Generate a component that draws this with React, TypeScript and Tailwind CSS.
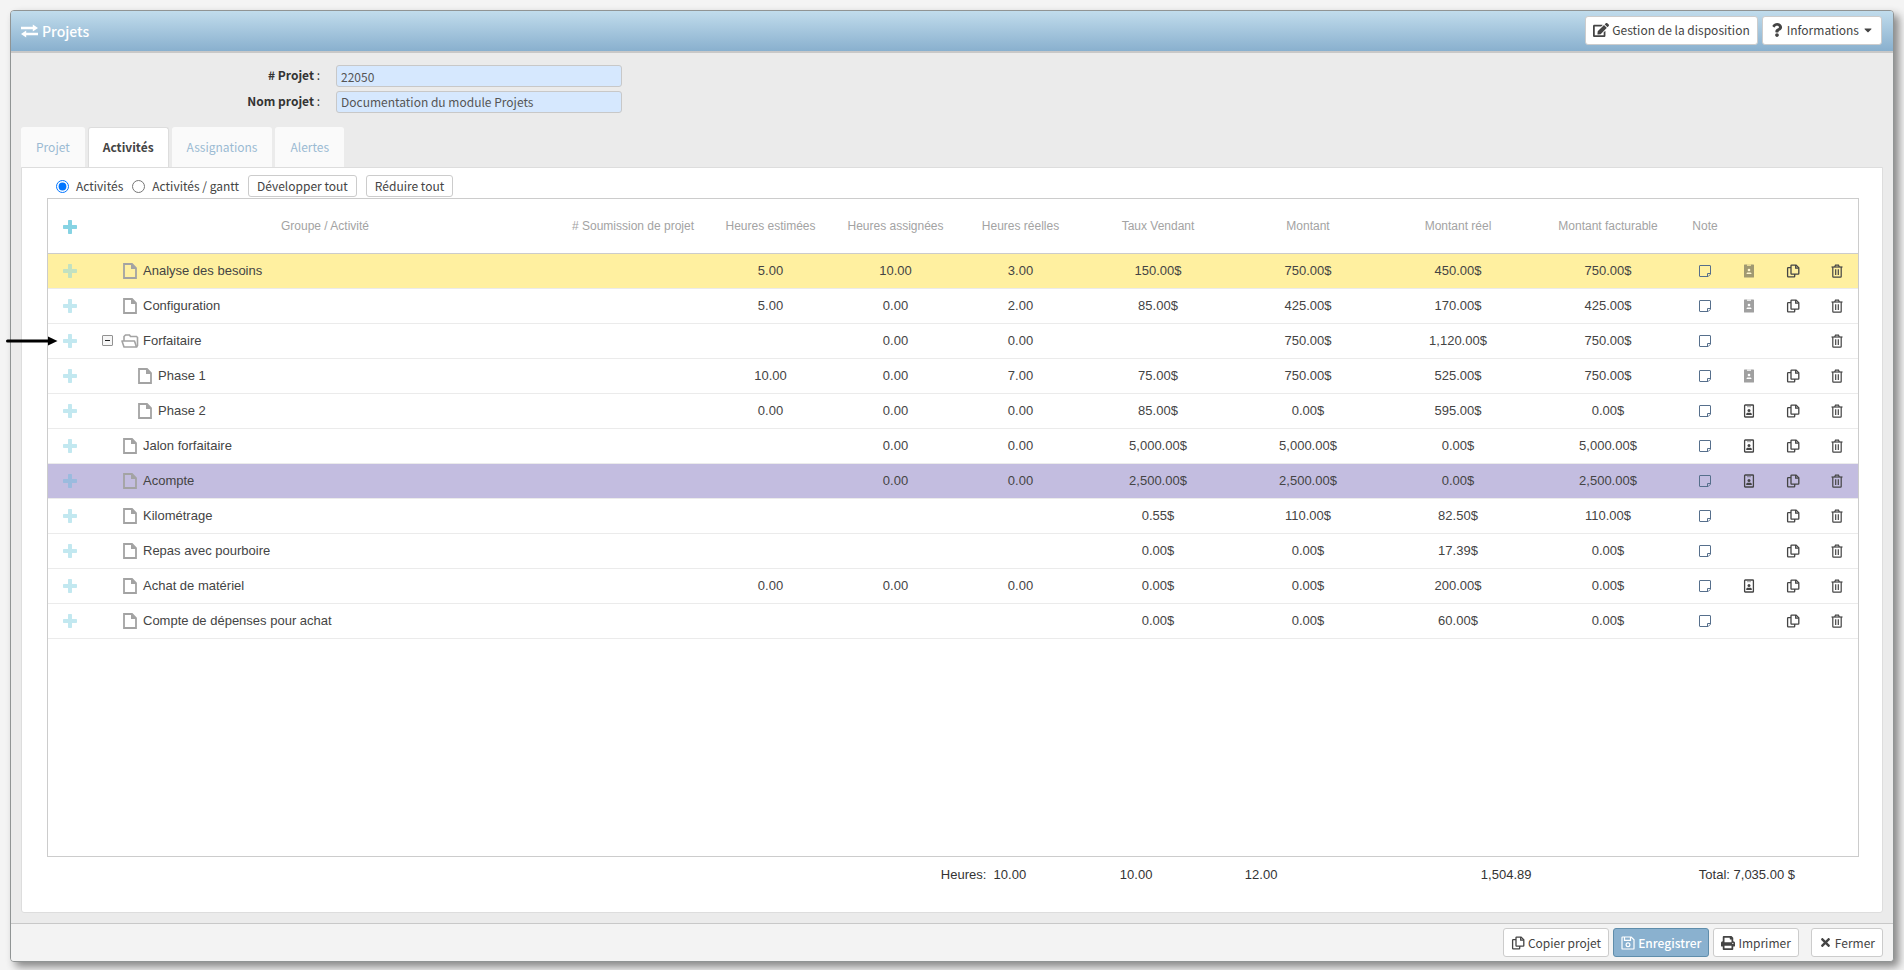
import React from 'react';
import { FaEdit, FaQuestion, FaPrint, FaTimes, FaCaretDown } from 'react-icons/fa';

type IconProps = { className?: string };

const ExchangeIcon: React.FC<IconProps> = ({ className }) => (
  <svg viewBox="0 0 17 14" className={className} fill="currentColor">
    <path d="M0 2.800h11.800V.4L17 4l-5.200 3.600V5.200H0z" />
    <path d="M17 8.800H5.200V6.400L0 10l5.200 3.600v-2.400H17z" />
  </svg>
);

const PlusIcon: React.FC<IconProps> = ({ className }) => (
  <svg viewBox="0 0 14 14" className={className} fill="currentColor">
    <path d="M5.700 0h2.600a.7.7 0 0 1 .7.7V5h4.300a.7.7 0 0 1 .7.7v2.600a.7.7 0 0 1-.7.7H9v4.300a.7.7 0 0 1-.7.7H5.700a.7.7 0 0 1-.7-.7V9H.7a.7.7 0 0 1-.7-.7V5.700A.7.7 0 0 1 .7 5H5V.7a.7.7 0 0 1 .7-.7z" />
  </svg>
);

const NoteIcon: React.FC<IconProps> = ({ className }) => (
  <svg viewBox="0 0 14 14" className={className} fill="none" stroke="currentColor" strokeWidth="1">
    <path d="M2 1.500h10a.5.5 0 0 1 .5.5v8.200l-2.300 2.300H2a.5.5 0 0 1-.5-.5V2a.5.5 0 0 1 .5-.5z" />
    <path d="M12.500 9.500H9.500v3" />
  </svg>
);

const BadgeIcon: React.FC<IconProps> = ({ className }) => (
  <svg viewBox="0 0 12 14" className={className}>
    <rect x="1.600" y="1" width="8.800" height="12" rx="0.600" fill="none" stroke="currentColor" strokeWidth="1.300" />
    <rect x="4" y="2.200" width="4" height="1" fill="currentColor" opacity="0.500" />
    <circle cx="6" cy="6.500" r="1.500" fill="currentColor" />
    <path d="M3.200 11V10.300c0-1 .8-1.500 1.600-1.500h2.400c.8 0 1.600.5 1.600 1.500V11z" fill="currentColor" />
  </svg>
);

const BadgeSolidIcon: React.FC<IconProps> = ({ className }) => (
  <svg viewBox="0 0 12 14" className={className}>
    <path d="M1.600.5H4V2H8V.5h2.400a.6.6 0 0 1 .6.6v11.800a.6.6 0 0 1-.6.6H1.600a.6.6 0 0 1-.6-.6V1.100a.6.6 0 0 1 .6-.6z" fill="currentColor" />
    <rect x="4" y="0.500" width="4" height="1" fill="currentColor" opacity="0.500" />
    <circle cx="6" cy="6" r="1.300" fill="#fff" />
    <path d="M3.500 10c0-1.200.7-1.600 1.500-1.600h2c.8 0 1.500.4 1.500 1.600z" fill="#fff" />
  </svg>
);

const CopyIcon: React.FC<IconProps> = ({ className }) => (
  <svg viewBox="0 0 14 14" className={className} fill="none" stroke="currentColor" strokeWidth="1.300">
    <path d="M5.600 1.100h4.500l2.700 2.700v5.700a.6.6 0 0 1-.6.6H5.600a.6.6 0 0 1-.6-.6V1.700a.6.6 0 0 1 .6-.6z" />
    <path d="M9.700 1.100V4.200h3" />
    <path d="M5 3.600H2.200a.6.6 0 0 0-.6.6v8.100a.6.6 0 0 0 .6.6h5.900a.6.6 0 0 0 .6-.6V10.100" />
  </svg>
);

const TrashIcon: React.FC<IconProps> = ({ className }) => (
  <svg viewBox="0 0 12 14" className={className} fill="none" stroke="currentColor" strokeWidth="1.200">
    <path d="M.5 3h11" />
    <path d="M3.700 3l.8-1.900h3l.8 1.900" />
    <path d="M1.800 3v9.400a.7.7 0 0 0 .7.700h7a.7.7 0 0 0 .7-.7V3" />
    <path d="M4.700 5.300v5.700M7.300 5.300v5.700" />
  </svg>
);

const SaveIcon: React.FC<IconProps> = ({ className }) => (
  <svg viewBox="0 0 14 14" className={className} fill="none" stroke="currentColor" strokeWidth="1.200">
    <path d="M1.600 1h8.600L13 3.800v8.600a.6.6 0 0 1-.6.6H1.600a.6.6 0 0 1-.6-.6V1.600A.6.6 0 0 1 1.600 1z" />
    <path d="M3.500 1v3.300h6V1" />
    <circle cx="7" cy="8.700" r="1.900" />
  </svg>
);

const FileIcon: React.FC<IconProps> = ({ className }) => (
  <svg viewBox="0 0 14 16" className={className}>
    <path d="M1 1H9L13 5V15H1z" fill="none" stroke="#a3a3a3" strokeWidth="1.800" />
    <path d="M8 1V6H13V5L9 1z" fill="#a3a3a3" />
  </svg>
);

const FolderIcon: React.FC<IconProps> = ({ className }) => (
  <svg viewBox="0 0 18 14" className={className} fill="none" stroke="#a3a3a3" strokeWidth="1.600">
    <path d="M3 7V2.500L4.500 1H8.500L9.500 2.500H15.500L16.500 3.500V12" />
    <path d="M1 7H13.500L15.500 13H3z" strokeLinejoin="round" />
    <path d="M15.500 13L16.500 12" />
  </svg>
);

const ToggleIcon: React.FC<IconProps> = ({ className }) => (
  <svg viewBox="0 0 11 11" className={className}>
    <rect x="0.500" y="0.500" width="10" height="10" rx="0.500" fill="#f6f6f6" stroke="#919191" />
    <path d="M3 5.500h5" stroke="#222" />
  </svg>
);

interface Row {
  name: string;
  kind?: 'file' | 'folder';
  level?: number;
  // estimées, assignées, réelles, taux, montant, montant réel, facturable
  values: string[];
  badge?: 'on' | 'off';
  copy?: boolean;
  tone?: 'yellow' | 'purple';
}

const rows: Row[] = [
  { name: 'Analyse des besoins', values: ['5.00', '10.00', '3.00', '150.00$', '750.00$', '450.00$', '750.00$'], badge: 'off', copy: true, tone: 'yellow' },
  { name: 'Configuration', values: ['5.00', '0.00', '2.00', '85.00$', '425.00$', '170.00$', '425.00$'], badge: 'off', copy: true },
  { name: 'Forfaitaire', kind: 'folder', values: ['', '0.00', '0.00', '', '750.00$', '1,120.00$', '750.00$'] },
  { name: 'Phase 1', level: 1, values: ['10.00', '0.00', '7.00', '75.00$', '750.00$', '525.00$', '750.00$'], badge: 'off', copy: true },
  { name: 'Phase 2', level: 1, values: ['0.00', '0.00', '0.00', '85.00$', '0.00$', '595.00$', '0.00$'], badge: 'on', copy: true },
  { name: 'Jalon forfaitaire', values: ['', '0.00', '0.00', '5,000.00$', '5,000.00$', '0.00$', '5,000.00$'], badge: 'on', copy: true },
  { name: 'Acompte', values: ['', '0.00', '0.00', '2,500.00$', '2,500.00$', '0.00$', '2,500.00$'], badge: 'on', copy: true, tone: 'purple' },
  { name: 'Kilométrage', values: ['', '', '', '0.55$', '110.00$', '82.50$', '110.00$'], copy: true },
  { name: 'Repas avec pourboire', values: ['', '', '', '0.00$', '0.00$', '17.39$', '0.00$'], copy: true },
  { name: 'Achat de matériel', values: ['0.00', '0.00', '0.00', '0.00$', '0.00$', '200.00$', '0.00$'], badge: 'on', copy: true },
  { name: 'Compte de dépenses pour achat', values: ['', '', '', '0.00$', '0.00$', '60.00$', '0.00$'], copy: true },
];

const headers = [
  'Groupe / Activité',
  '# Soumission de projet',
  'Heures estimées',
  'Heures assignées',
  'Heures réelles',
  'Taux Vendant',
  'Montant',
  'Montant réel',
  'Montant facturable',
  'Note',
];

const tabs = ['Projet', 'Activités', 'Assignations', 'Alertes'];

const rowTone = {
  yellow: 'bg-[#fff0a0]',
  purple: 'bg-[#c3bde0]',
  none: 'bg-white',
};

const IconButton: React.FC<{ label: string; children: React.ReactNode; className?: string }> = ({
  label,
  children,
  className = '',
}) => (
  <button type="button" aria-label={label} className={`inline-flex align-middle ${className}`}>
    {children}
  </button>
);

const ActivityRow: React.FC<{ row: Row }> = ({ row }) => (
  <tr className={`h-[35px] border-b border-[#ebebeb] ${rowTone[row.tone ?? 'none']}`}>
    <td className="relative text-center">
      {row.kind === 'folder' && (
        <svg viewBox="0 0 52 10" className="absolute -left-[42px] top-3 h-[10px] w-[52px]">
          <path d="M1.500 5H43" stroke="#000" strokeWidth="3" strokeLinecap="round" />
          <path d="M42 .5L51.500 5L42 9.500z" fill="#000" />
        </svg>
      )}
      <IconButton
        label={`Ajouter sous ${row.name}`}
        className={`opacity-50 ${row.tone === 'purple' ? 'text-[#75bbdd]' : 'text-[#86d3e3]'}`}
      >
        <PlusIcon className="h-[14px] w-[14px]" />
      </IconButton>
    </td>
    <td>
      <div className={`flex items-center ${row.level ? 'pl-[46px]' : 'pl-[10px]'}`}>
        {row.kind === 'folder' ? (
          <>
            <IconButton label="Réduire" className="mr-2">
              <ToggleIcon className="h-[11px] w-[11px]" />
            </IconButton>
            <FolderIcon className="mr-1 h-[14px] w-[18px]" />
          </>
        ) : (
          <FileIcon className={`mr-[6px] h-4 w-[14px] ${row.level ? '' : 'ml-[21px]'}`} />
        )}
        {row.name}
      </div>
    </td>
    <td />
    {row.values.map((value, i) => (
      <td key={i} className="text-center">{value}</td>
    ))}
    <td className="text-center">
      <IconButton label="Note" className="text-[#566f8c]"><NoteIcon className="h-[14px] w-[14px]" /></IconButton>
    </td>
    <td className="text-center">
      {row.badge === 'on' && (
        <IconButton label="Assigner"><BadgeIcon className="h-[14px] w-3" /></IconButton>
      )}
      {row.badge === 'off' && (
        <IconButton label="Assigner" className="opacity-50"><BadgeSolidIcon className="h-[14px] w-3" /></IconButton>
      )}
    </td>
    <td className="text-center">
      {row.copy && <IconButton label="Copier"><CopyIcon className="h-[14px] w-[14px]" /></IconButton>}
    </td>
    <td className="text-center">
      <IconButton label="Supprimer"><TrashIcon className="h-[14px] w-3" /></IconButton>
    </td>
  </tr>
);

const Button: React.FC<{ children: React.ReactNode; primary?: boolean; className?: string }> = ({
  children,
  primary,
  className = '',
}) => (
  <button
    type="button"
    className={`flex h-[29px] items-center gap-[3px] rounded-[3px] border px-[7px] ${
      primary ? 'border-[#5f8dab] bg-[#8ab1cf] font-medium text-white' : 'border-[#ccc] bg-white text-[#444]'
    } ${className}`}
  >
    {children}
  </button>
);

const App: React.FC = () => {
  return (
    <div className="flex min-h-screen flex-col bg-[#f4f4f4] pt-[10px] pr-[10px] pb-2 pl-[10px] font-['Noto_Sans_CJK_SC',sans-serif] text-xs leading-5 text-[#444]">
      <div className="flex flex-1 flex-col rounded-[4px] border border-[#909494] bg-[#ebebeb] shadow-[5px_5px_8px_#888]">
        <header className="flex h-[42px] items-center rounded-t-[3px] border-b-2 border-[#c8c8c8] bg-linear-to-b from-[#c1dcec] to-[#89b0ce] pr-[11px] pb-[2px] pl-[10px]">
          <h1 className="flex flex-1 items-center gap-1 pt-[2px] text-sm font-medium text-white">
            <ExchangeIcon className="h-[14px] w-[17px]" />
            Projets
          </h1>
          <div className="flex gap-1">
            <Button><FaEdit size={16} />Gestion de la disposition</Button>
            <Button><FaQuestion size={14} />Informations<FaCaretDown size={12} /></Button>
          </div>
        </header>

        <div className="flex flex-1 flex-col px-[10px] pt-3 pb-[10px]">
          <form className="grid grid-cols-[299px_286px] gap-x-4 gap-y-1">
            <label htmlFor="num" className="text-right text-[#333]"><b>{'# Projet'}</b> :</label>
            <input id="num" defaultValue="22050" className="h-[22px] rounded-[3px] border border-[#c8c8c8] bg-[#d6e8fe] px-1 text-[#555]" />
            <label htmlFor="nom" className="text-right text-[#333]"><b>Nom projet</b> :</label>
            <input id="nom" defaultValue="Documentation du module Projets" className="h-[22px] rounded-[3px] border border-[#c8c8c8] bg-[#d6e8fe] px-1 pb-[2px] text-[#555]" />
          </form>

          <nav className="mt-[14px] -mb-px flex gap-[3px]">
            {tabs.map((tab) => (
              <button
                key={tab}
                type="button"
                className={`h-[41px] rounded-t-[3px] border px-[14px] pb-[2px] ${
                  tab === 'Activités'
                    ? 'border-[#ddd] border-b-white bg-white font-bold text-[#444]'
                    : 'border-[#fafafa] border-b-[#ddd] bg-[#fafafa] text-[#9bbad3]'
                }`}
              >
                {tab}
              </button>
            ))}
          </nav>

          <section className="flex flex-1 flex-col rounded-b-[3px] border border-[#ddd] bg-white pt-[6px] pr-[23px] pl-[25px]">
            <div className="flex h-6 items-center pl-[9px]">
              <label className="flex items-center">
                <input type="radio" name="vue" defaultChecked className="mr-[7px] h-[13px] w-[13px]" />
                Activités
              </label>
              <label className="ml-[9px] flex items-center">
                <input type="radio" name="vue" className="mr-[7px] h-[13px] w-[13px]" />
                Activités / gantt
              </label>
              <button type="button" className="ml-[9px] flex h-[22px] items-center rounded-[3px] border border-[#ccc] px-2">Développer tout</button>
              <button type="button" className="ml-[9px] flex h-[22px] items-center rounded-[3px] border border-[#ccc] px-2">Réduire tout</button>
            </div>

            <div className="flex-1 border border-[#ccc] font-['Liberation_Sans',sans-serif] text-[13px]">
              <table className="w-full table-fixed border-collapse">
                <colgroup>
                  <col className="w-[44px]" />
                  <col />
                  <col className="w-[150px]" />
                  <col className="w-[125px]" />
                  <col className="w-[125px]" />
                  <col className="w-[125px]" />
                  <col className="w-[150px]" />
                  <col className="w-[150px]" />
                  <col className="w-[150px]" />
                  <col className="w-[150px]" />
                  <col className="w-[44px]" />
                  <col className="w-[44px]" />
                  <col className="w-[44px]" />
                  <col className="w-[43px]" />
                </colgroup>
                <thead>
                  <tr className="h-[54px] border-b border-[#ccc] text-xs text-[#a3a3a3]">
                    <th>
                      <IconButton label="Ajouter" className="text-[#86d3e3]"><PlusIcon className="h-[14px] w-[14px]" /></IconButton>
                    </th>
                    {headers.map((h) => (
                      <th key={h} className="font-normal">{h}</th>
                    ))}
                    <th />
                    <th />
                    <th />
                  </tr>
                </thead>
                <tbody>
                  {rows.map((row) => (
                    <ActivityRow key={row.name} row={row} />
                  ))}
                </tbody>
              </table>
            </div>

            <div className="flex h-[55px] justify-end pt-2 pr-[64px] font-['Liberation_Sans',sans-serif] text-[13px] text-[#333]">
              <span className="w-[179px]">Heures: &nbsp;10.00</span>
              <span className="w-[125px]">10.00</span>
              <span className="w-[236px]">12.00</span>
              <span className="w-[218px]">1,504.89</span>
              <span>Total: 7,035.00 $</span>
            </div>
          </section>
        </div>

        <footer className="flex h-[38px] items-center justify-end gap-1 rounded-b-[3px] border-t border-[#c8c8c8] bg-[#f3f3f3] pr-[10px]">
          <Button><CopyIcon className="h-[14px] w-[14px]" />Copier projet</Button>
          <Button primary><SaveIcon className="h-[14px] w-[14px]" />Enregistrer</Button>
          <Button><FaPrint size={14} />Imprimer</Button>
          <Button className="ml-2"><FaTimes size={13} />Fermer</Button>
        </footer>
      </div>
    </div>
  );
};

export default App;
